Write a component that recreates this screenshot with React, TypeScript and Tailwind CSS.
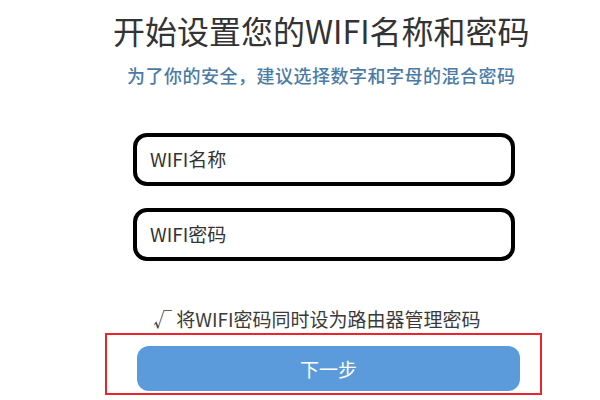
export default function App() {
  return (
    <div
      className="w-[600px] h-[400px] overflow-hidden bg-white text-[#333]"
      style={{ fontFamily: '"Noto Sans CJK SC", "Noto Sans", sans-serif' }}
    >
      <div className="pt-[14px] ml-[113px] whitespace-nowrap text-[32px] leading-none">
        开始设置您的WIFI名称和密码
      </div>
      <div className="mt-[20px] ml-[127px] whitespace-nowrap text-[18px] leading-none font-medium tracking-[0.5px] text-[#4a7ba6]">
        为了你的安全，建议选择数字和字母的混合密码
      </div>

      <div className="mt-[49px] ml-[133px] flex flex-col gap-[22px]">
        <Field label="WIFI名称" />
        <Field label="WIFI密码" />
      </div>

      <div className="mt-[48px] ml-[153px] whitespace-nowrap text-[19px] leading-none text-[#3a3a3a]">
        √ 将WIFI密码同时设为路由器管理密码
      </div>

      <div className="mt-[5px] ml-[105px] w-[437px] h-[62px] border-2 border-[#e8262b] pl-[30px] pt-[11px]">
        <button className="w-[383px] h-[45px] rounded-[12px] bg-[#5b9bdb] text-white text-[19px] leading-none">
          下一步
        </button>
      </div>
    </div>
  )
}

function Field({ label }: { label: string }) {
  return (
    <div className="w-[382px] h-[53px] rounded-[14px] border-[4px] border-black flex items-center pl-[13px] text-[19px] text-[#333]">
      {label}
    </div>
  )
}
